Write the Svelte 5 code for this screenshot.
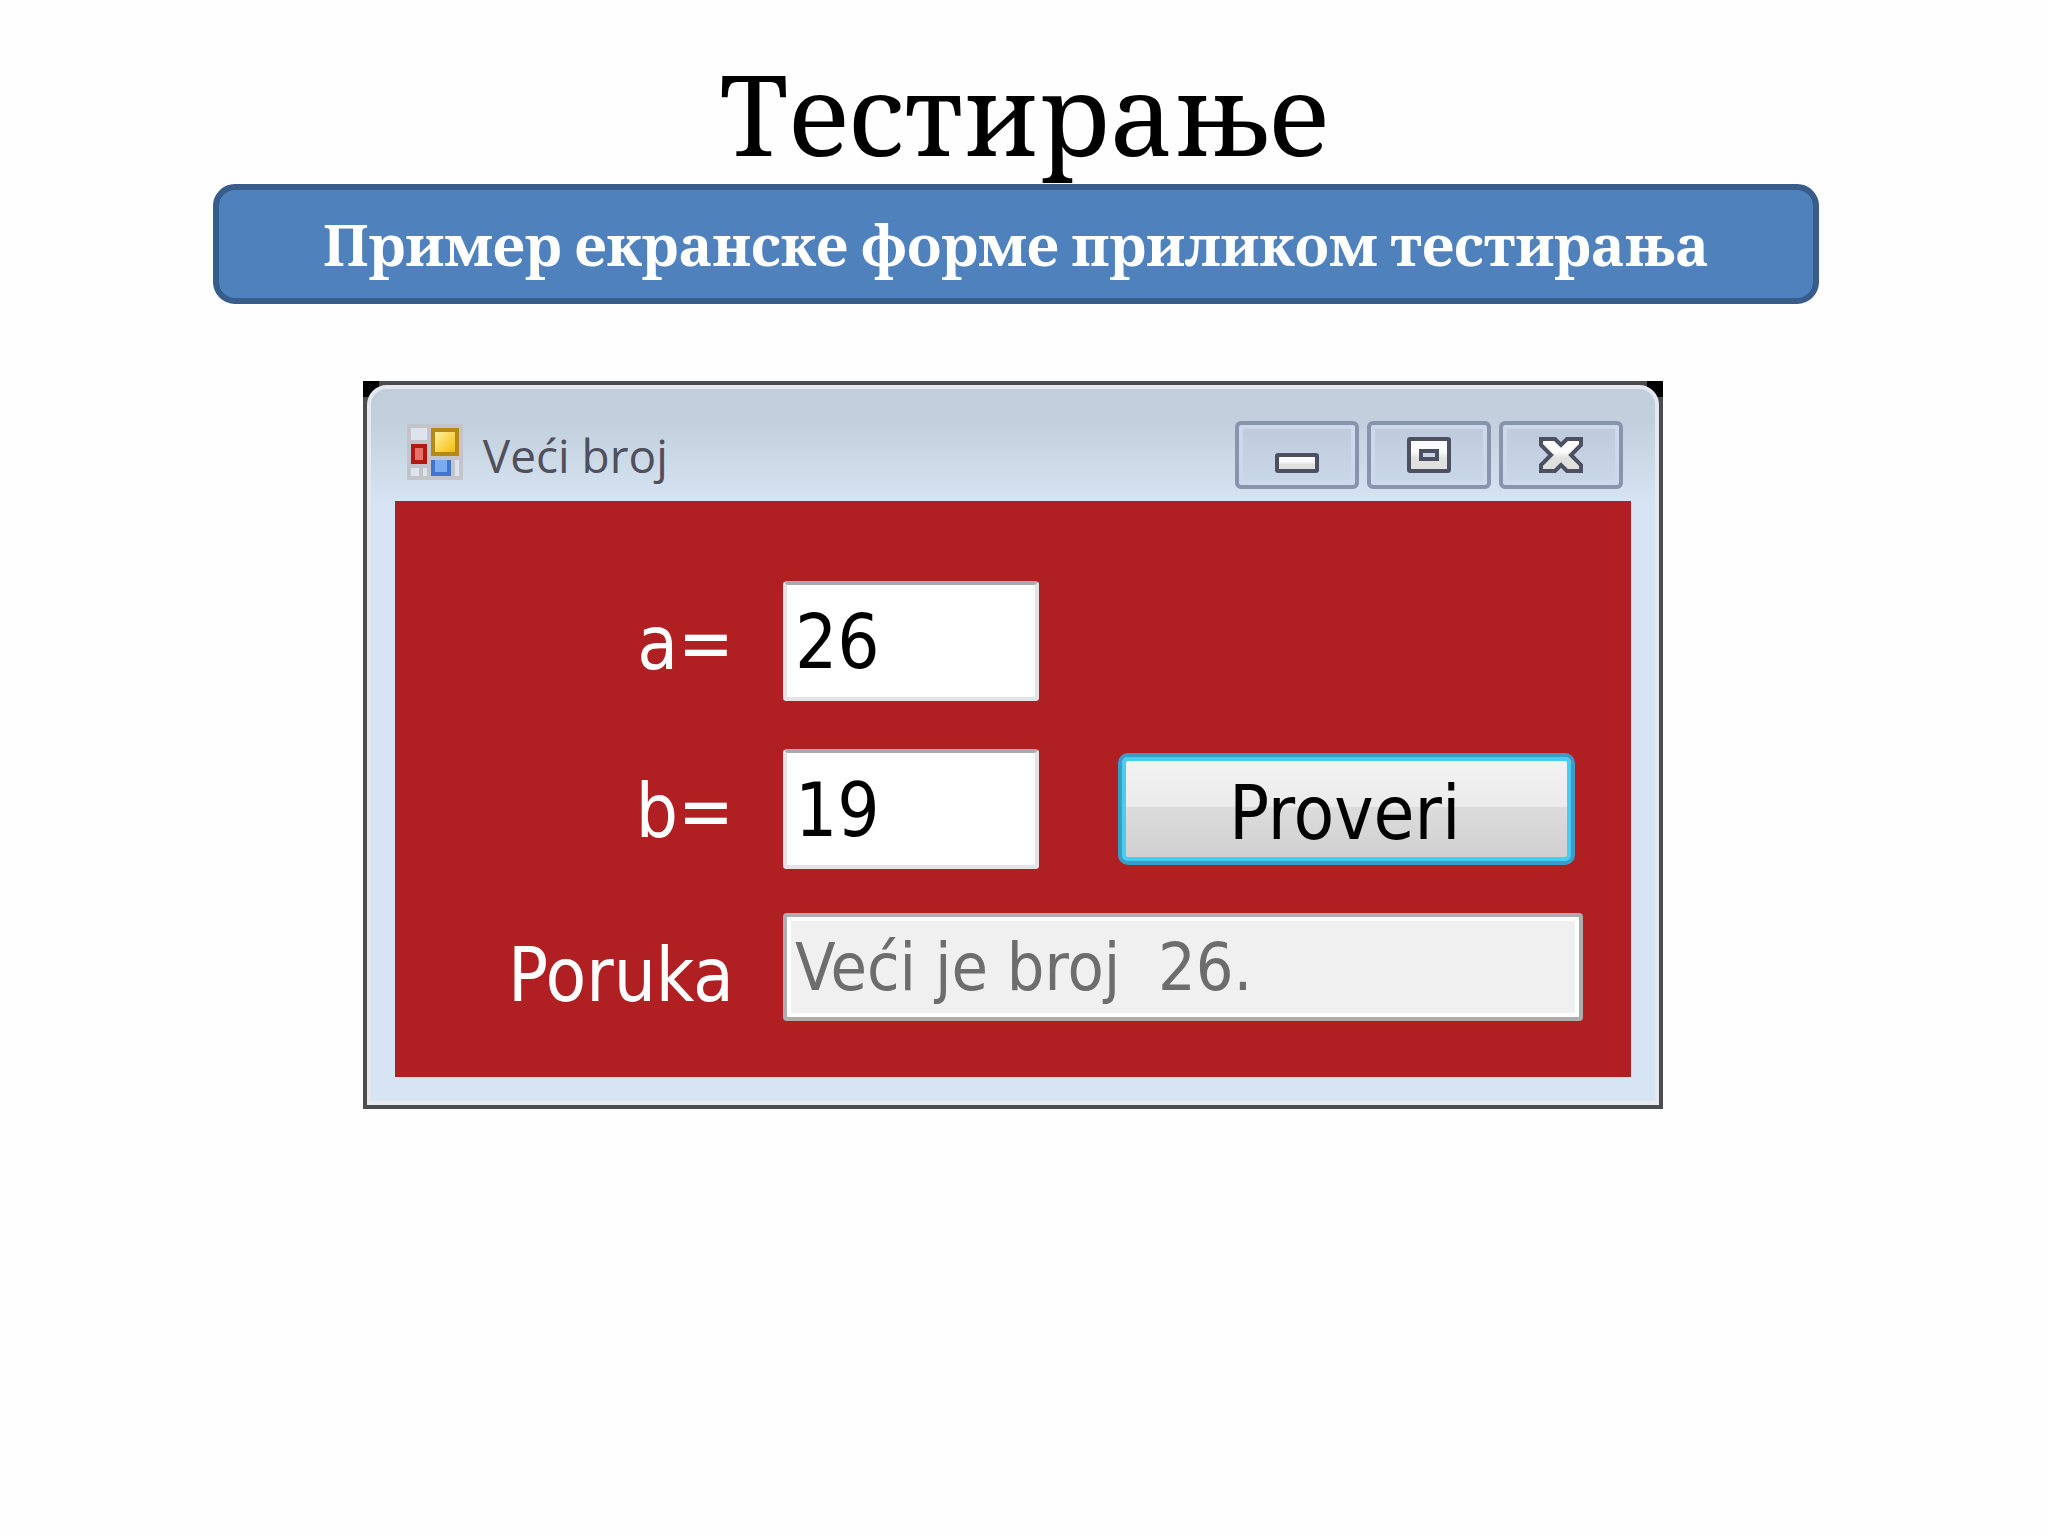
<script>
    let a = "26";
    let b = "19";
    let poruka = "Veći je broj  26.";

    function proveri(event) {
        event.preventDefault();

        const x = Number(a);
        const y = Number(b);

        if(x === y){
            poruka = "Brojevi su jednaki.";
        } else {
            poruka = `Veći je broj  ${Math.max(x, y)}.`;
        }
    }
</script>

<main>
<h1>Тестирање</h1>

<h2>Пример екранске форме приликом тестирања</h2>

<div class="window">
<div class="frame">

<header>
<svg class="app-icon" viewBox="0 0 14 14" shape-rendering="crispEdges" aria-hidden="true">
<rect width="14" height="14" fill="#c3c5ca" />
<path d="M1 1h4v3H1zM1 11h2v2H1zM4 11h1v2H4zM12 9h1v4h-1z" fill="#dde4ee" />
<rect x="6" y="1" width="7" height="7" fill="#b48a12" />
<rect x="7" y="2" width="5" height="5" fill="url(#yellow)" />
<rect x="1" y="5" width="4" height="5" fill="#b01a12" />
<rect x="2" y="6" width="2" height="3" fill="#e5736a" />
<rect x="6" y="9" width="5" height="4" fill="#4274d0" />
<rect x="7" y="9" width="3" height="3" fill="#7dabf0" />
<defs>
<linearGradient id="yellow" x1="0" y1="0" x2="1" y2="1">
<stop offset="0" stop-color="#fff0a0" />
<stop offset="1" stop-color="#f5bd08" />
</linearGradient>
</defs>
</svg>

<span class="caption">Veći broj</span>

<div class="window-buttons">
<button type="button" aria-label="Minimize">
<svg viewBox="0 0 11 9">
<defs>
<linearGradient id="glyph" x1="0" y1="0" x2="0" y2="1">
<stop offset="0.4" stop-color="#fbfbfb" />
<stop offset="0.6" stop-color="#e0e0df" />
</linearGradient>
</defs>
<rect x="0.5" y="4.5" width="10" height="4" rx="0.3" />
</svg>
</button>
<button type="button" aria-label="Maximize">
<svg viewBox="0 0 11 9">
<rect x="0.5" y="0.5" width="10" height="8" rx="0.3" />
<rect class="hole" x="3.5" y="3.5" width="4" height="2" />
</svg>
</button>
<button type="button" aria-label="Close">
<svg viewBox="0 0 11 9">
<path d="M.5 .5h3.5l1.5 1.5 1.5-1.5h3.5v1.5l-2.5 2.5 2.5 2.5v1.5h-3.5l-1.5-1.5-1.5 1.5h-3.5v-1.5l2.5-2.5-2.5-2.5z" />
</svg>
</button>
</div>
</header>

<form on:submit={proveri}>
<label for="a">a=</label>
<input id="a" type="text" bind:value={a}>

<label class="second" for="b">b=</label>
<input class="second" id="b" type="text" bind:value={b}>
<button class="proveri" type="submit">Proveri</button>

<label class="last" for="poruka">Poruka</label>
<input class="poruka" id="poruka" type="text" value={poruka} disabled>
</form>

</div>
</div>
</main>

<style>
:global(body){
    margin: 0;
    background: #fefefe;
}

*{
    box-sizing: border-box;
}

main{
    display: flex;
    flex-direction: column;
    align-items: center;
    padding: 56px 16px 40px 0;
}

/* Naslovi */
h1, h2{
    margin: 0;
    font-family: Cambria, Caladea, "Noto Serif", "Liberation Serif", serif;
    text-align: center;
}

h1{
    padding-left: 16px;
    font-size: 112px;
    line-height: 128px;
    font-weight: 400;
    color: #000;
}

h2{
    width: 79%;
    padding: 22px 16px 14px;
    border: 6px solid #385d8a;
    border-radius: 22px;
    background: #4f81bd;
    color: white;
    font-size: 57px;
    line-height: 72px;
    font-weight: 700;
}

/* Prozor */
.window{
    width: 64%;
    margin-top: 77px;
    margin-right: 6px;
    padding: 4px;
    background:
        linear-gradient(#000, #000) left top / 16px 16px no-repeat,
        linear-gradient(#000, #000) right top / 16px 16px no-repeat,
        #4b4c4e;
}

.frame{
    padding: 0 24px 24px;
    border: 4px solid #e6e7ef;
    border-radius: 20px 20px 0 0;
    background: linear-gradient(#bfceda 0, #c2d0dd 32px, #d7e4f3 116px);
}

header{
    display: flex;
    align-items: center;
    height: 112px;
    padding: 24px 8px 4px 12px;
}

.app-icon{
    width: 56px;
    height: 56px;
    margin-bottom: 6px;
}

.caption{
    flex: 1;
    margin-left: 20px;
    font-family: "Segoe UI", "Open Sans", sans-serif;
    font-size: 46px;
    line-height: 56px;
    color: #50505c;
}

.window-buttons{
    display: flex;
    gap: 8px;
}

.window-buttons button{
    display: flex;
    align-items: center;
    justify-content: center;
    width: 124px;
    height: 68px;
    padding: 0;
    border: 4px solid #8694ae;
    border-radius: 6px;
    background: linear-gradient(#bdcadb, #c9d8e9);
    box-shadow: inset 0 0 0 4px #cbd9ea;
}

.window-buttons svg{
    width: 44px;
    height: 36px;
    fill: url(#glyph);
    stroke: #4c5060;
    stroke-width: 1;
}

.window-buttons .hole{
    fill: #c9d6e6;
}

/* Formular */
form{
    display: grid;
    grid-template-columns: 97fr 64fr 136fr;
    align-items: center;
    padding: 80px 48px 56px 0;
    background: #b02022;
}

label, input, .proveri{
    font-family: Tahoma, "DejaVu Sans Condensed", "Noto Sans", sans-serif;
    font-size: 74px;
}

label{
    padding-top: 4px;
    padding-right: 49px;
    line-height: 92px;
    color: white;
    text-align: right;
}

label.second, input.second, .proveri{
    margin-top: 48px;
}

label.last{
    align-self: end;
}

input{
    width: 100%;
    height: 120px;
    padding: 2px 8px 0;
    border: 4px solid #e3e4ea;
    border-top-color: #ababaf;
    border-radius: 4px;
    background: white;
    color: #000;
    outline: none;
}

.poruka{
    grid-column: span 2;
    height: 108px;
    margin-top: 44px;
    padding-top: 0;
    border-color: #aeaeae;
    background: #f0f0f1;
    box-shadow: inset 0 0 0 4px white;
    font-size: 66px;
    color: #6d6d6d;
}

label.second{
    grid-column: 1;
}

.proveri{
    justify-self: end;
    width: 84%;
    height: 112px;
    margin-right: 8px;
    padding: 8px 4px 0 0;
    border: 4px solid #3c9cc8;
    border-radius: 10px;
    background: linear-gradient(#f3f3f3, #ebebeb 48%, #dcdcdc 48%, #cfcfcf);
    box-shadow: inset 0 0 0 4px #45cdf2;
    color: #000;
}
</style>
